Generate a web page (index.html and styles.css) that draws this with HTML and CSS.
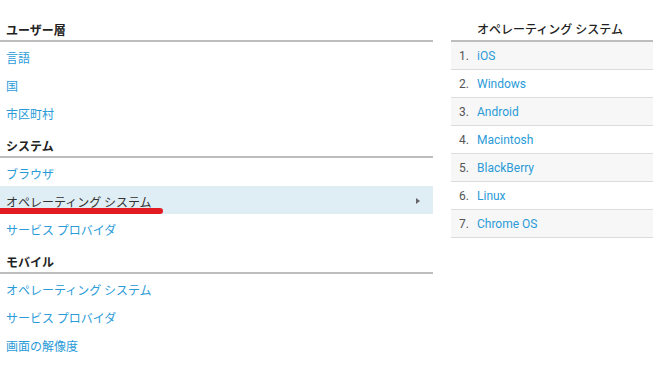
FILE: index.html
```html
<!DOCTYPE html>
<html lang="ja">
<head>
	<meta charset="utf-8">
	<link rel="stylesheet" href="styles.css">
</head>
<body>
	<div id="report">
		<div id="dimensions">
			<div class="group-title">ユーザー層</div>
			<a class="dim" href="#">言語</a>
			<a class="dim" href="#">国</a>
			<a class="dim" href="#">市区町村</a>

			<div class="group-title">システム</div>
			<a class="dim" href="#">ブラウザ</a>
			<a class="dim selected" href="#">オペレーティング システム<span class="caret"></span></a>
			<a class="dim" href="#">サービス プロバイダ</a>

			<div class="group-title">モバイル</div>
			<a class="dim" href="#">オペレーティング システム</a>
			<a class="dim" href="#">サービス プロバイダ</a>
			<a class="dim" href="#">画面の解像度</a>
		</div>

		<div id="values">
			<div class="table-title">オペレーティング システム</div>
			<ol class="rows">
				<li><span class="num">1.</span><a href="#">iOS</a></li>
				<li><span class="num">2.</span><a href="#">Windows</a></li>
				<li><span class="num">3.</span><a href="#">Android</a></li>
				<li><span class="num">4.</span><a href="#">Macintosh</a></li>
				<li><span class="num">5.</span><a href="#">BlackBerry</a></li>
				<li><span class="num">6.</span><a href="#">Linux</a></li>
				<li><span class="num">7.</span><a href="#">Chrome OS</a></li>
			</ol>
		</div>
	</div>

	<span class="underline-mark"></span>
</body>
</html>
```

FILE: styles.css
```css
body {
	margin: 0;
	background: #fff;
	font-family: "Noto Sans CJK JP", "Roboto", sans-serif;
	font-size: 12px;
	color: #222;
}

a {
	text-decoration: none;
	color: #2a9bd8;
}

#report {
	display: flex;
	gap: 18px;
	padding-top: 10px;
}

#dimensions {
	width: 433px;
	display: flex;
	flex-direction: column;
}

.group-title,
.table-title {
	height: 30px;
	box-sizing: border-box;
	padding: 11px 0 0 6px;
	line-height: 18px;
	font-weight: bold;
	color: #222;
	border-bottom: 2px solid #bdbdbd;
}

.dim {
	display: flex;
	align-items: center;
	justify-content: space-between;
	height: 28px;
	padding: 2px 13px 0 6px;
	box-sizing: border-box;
}

.dim.selected {
	background: #dfedf4;
	color: #333;
}

.caret {
	width: 0;
	height: 0;
	border-top: 3px solid transparent;
	border-bottom: 3px solid transparent;
	border-left: 4px solid #666;
}

#values {
	flex: 1;
}

.table-title {
	height: 32px;
	padding-left: 26px;
	font-weight: 500;
	font-family: "Roboto", "Noto Sans CJK JP", sans-serif;
}

#dimensions .group-title {
	height: 32px;
}

.rows {
	list-style: none;
	margin: 0;
	padding: 0;
	font-family: "Roboto", "Noto Sans CJK JP", sans-serif;
}

.rows li {
	display: flex;
	align-items: center;
	height: 28px;
	box-sizing: border-box;
	border-bottom: 1px solid #dcdcdc;
	padding: 1px 0 0 8px;
}

.rows li:nth-child(odd) {
	background: #f7f7f7;
}

.num {
	width: 18px;
	color: #555;
}

.underline-mark {
	position: absolute;
	left: 0;
	top: 208px;
	width: 163px;
	height: 6px;
	background: #e21b22;
	border-radius: 0 3px 3px 0;
}
```
